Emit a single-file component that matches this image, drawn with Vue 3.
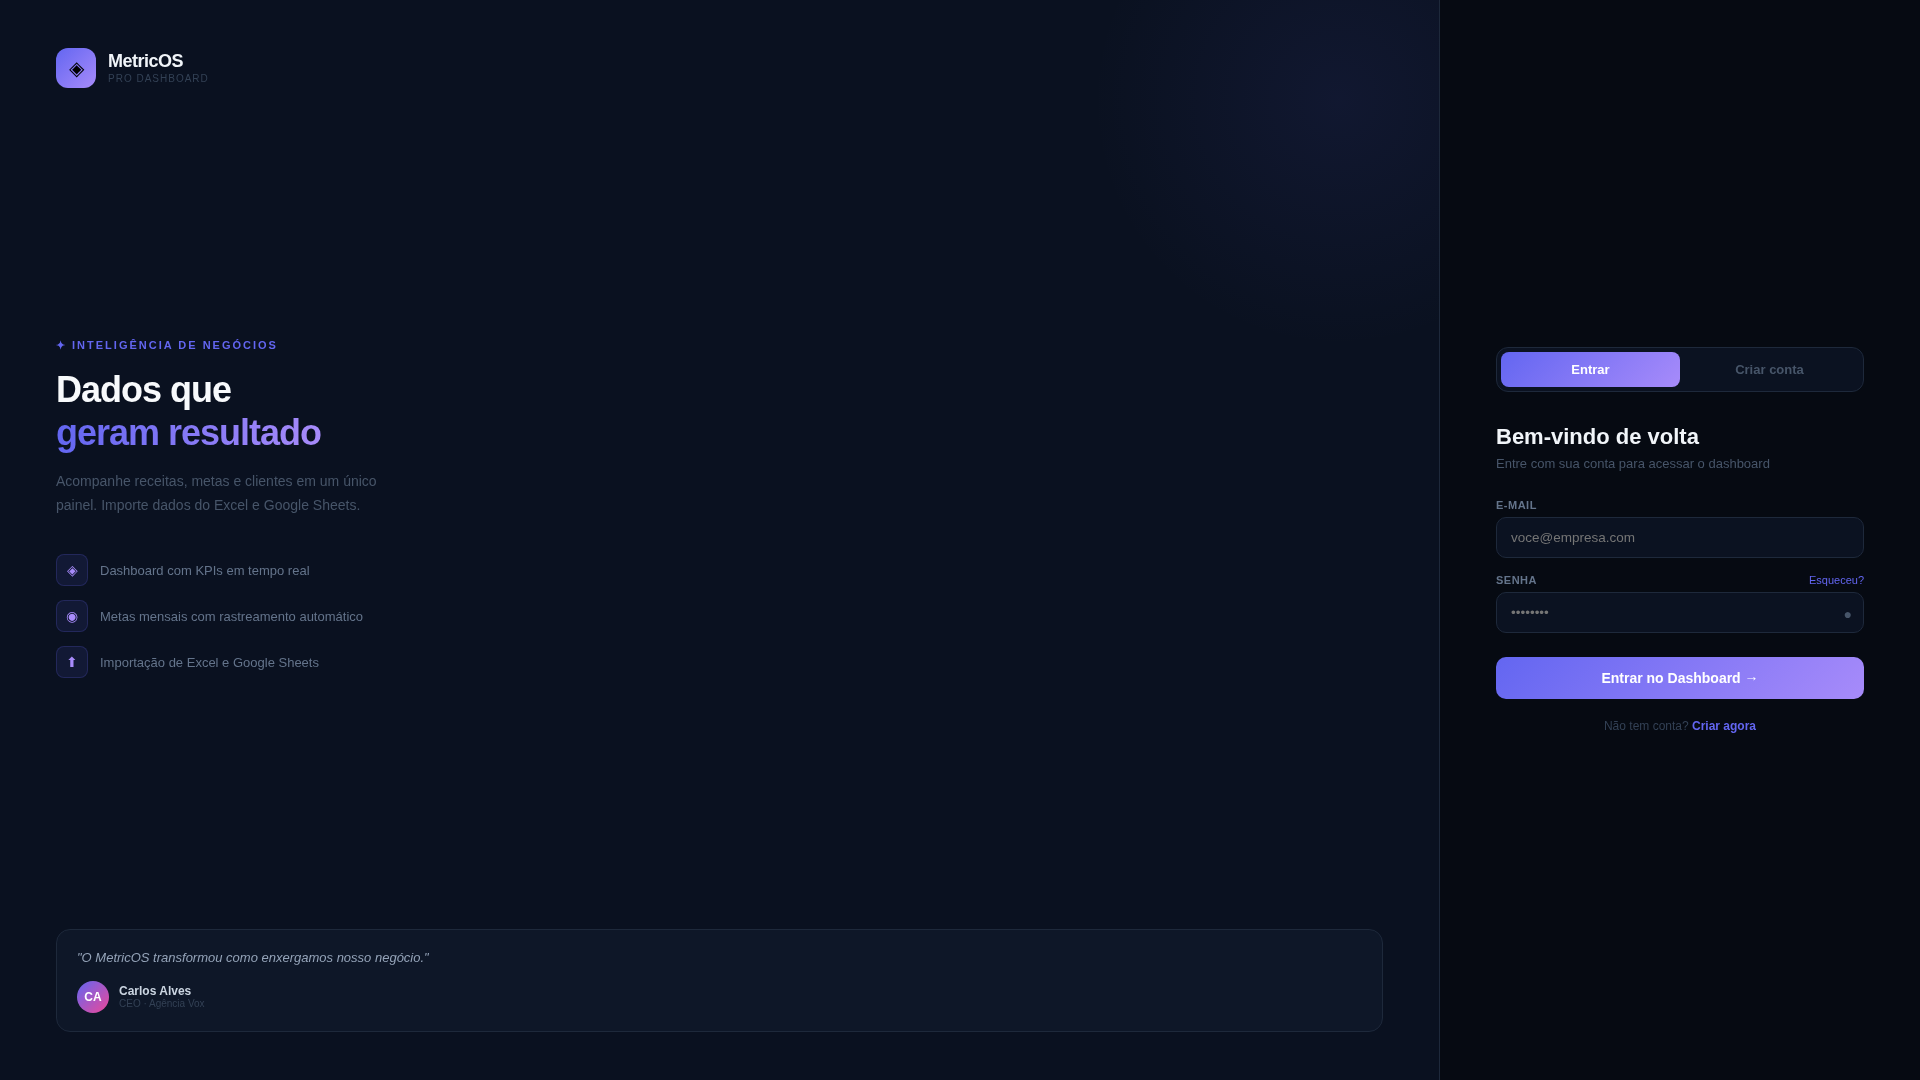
<template>
  <div class="page">
    <section class="left">
      <div class="glow"></div>

      <div class="brand">
        <div class="brand-icon">◈</div>
        <div class="brand-text">
          <div class="brand-name">MetricOS</div>
          <div class="brand-sub">PRO DASHBOARD</div>
        </div>
      </div>

      <div class="hero">
        <div class="eyebrow">✦ INTELIGÊNCIA DE NEGÓCIOS</div>
        <h1>Dados que<br><span>geram resultado</span></h1>
        <p class="lead">Acompanhe receitas, metas e clientes em um único painel. Importe dados do Excel e Google Sheets.</p>
        <ul class="features">
          <li v-for="f in features" :key="f.text">
            <span class="feature-icon">{{ f.icon }}</span>
            <span class="feature-text">{{ f.text }}</span>
          </li>
        </ul>
      </div>

      <div class="quote-card">
        <p class="quote">"O MetricOS transformou como enxergamos nosso negócio."</p>
        <div class="author">
          <div class="avatar">CA</div>
          <div>
            <div class="author-name">Carlos Alves</div>
            <div class="author-role">CEO · Agência Vox</div>
          </div>
        </div>
      </div>
    </section>

    <section class="right">
      <div class="form">
        <div class="tabs">
          <button class="tab active">Entrar</button>
          <button class="tab">Criar conta</button>
        </div>

        <h2>Bem-vindo de volta</h2>
        <p class="sub">Entre com sua conta para acessar o dashboard</p>

        <label class="field-label">E-MAIL</label>
        <div class="input-wrap">
          <input type="email" placeholder="voce@empresa.com" />
        </div>

        <div class="label-row">
          <label class="field-label">SENHA</label>
          <a class="forgot">Esqueceu?</a>
        </div>
        <div class="input-wrap">
          <input type="password" placeholder="••••••••" />
          <span class="eye">●</span>
        </div>

        <button class="submit">Entrar no Dashboard <span class="arrow">→</span></button>
        <p class="foot">Não tem conta? <a>Criar agora</a></p>
      </div>
    </section>
  </div>
</template>

<script setup>
const features = [
  { icon: '◈', text: 'Dashboard com KPIs em tempo real' },
  { icon: '◉', text: 'Metas mensais com rastreamento automático' },
  { icon: '⬆', text: 'Importação de Excel e Google Sheets' }
]
</script>

<style>
html, body { margin: 0; background: #0a1120; }
</style>

<style scoped>
.page {
  display: flex;
  height: 1080px;
  font-family: "Liberation Sans", Arial, sans-serif;
  background: #0a1120;
  overflow: hidden;
}

.left {
  position: relative;
  flex: 1;
  display: flex;
  flex-direction: column;
  justify-content: space-between;
  padding: 48px 56px;
  overflow: hidden;
  border-right: 1px solid #1e293b;
}
.glow {
  position: absolute;
  top: -150px;
  right: -150px;
  width: 500px;
  height: 500px;
  border-radius: 50%;
  background: radial-gradient(circle, rgba(99, 102, 241, 0.08) 0%, transparent 70%);
}

.brand, .hero, .quote-card, .form { will-change: transform; }

.brand { display: flex; align-items: center; gap: 12px; position: relative; }
.brand-icon {
  width: 40px;
  height: 40px;
  border-radius: 12px;
  background: linear-gradient(135deg, #6366f1, #a78bfa);
  display: flex;
  align-items: center;
  justify-content: center;
  font-size: 20px;
  color: #000;
}
.brand-text { padding-bottom: 2px; }
.brand-name {
  font-size: 18px;
  font-weight: 700;
  letter-spacing: -0.5px;
  color: #f1f5f9;
}
.brand-sub {
  margin-top: 1px;
  font-size: 10px;
  letter-spacing: 1px;
  color: #334155;
}

.hero { position: relative; }
.eyebrow {
  font-size: 11px;
  font-weight: 600;
  letter-spacing: 2px;
  line-height: 13px;
  color: #6366f1;
  margin-bottom: 16px;
}
h1 {
  margin: 0 0 16px;
  font-size: 36px;
  font-weight: 800;
  line-height: 1.2;
  letter-spacing: -1px;
  color: #f8fafc;
}
h1 span {
  background: linear-gradient(90deg, #6366f1, #a78bfa);
  -webkit-background-clip: text;
  background-clip: text;
  color: transparent;
}
.lead {
  margin: 0 0 36px;
  width: 340px;
  font-size: 14px;
  line-height: 1.7;
  color: #475569;
}
.features {
  list-style: none;
  margin: 0;
  padding: 0;
  display: flex;
  flex-direction: column;
  gap: 14px;
}
.features li {
  display: flex;
  align-items: center;
  gap: 12px;
  font-size: 13px;
  color: #64748b;
}
.feature-text { padding-top: 2px; }
.feature-icon {
  width: 32px;
  height: 32px;
  box-sizing: border-box;
  border-radius: 8px;
  background: rgba(99, 102, 241, 0.1);
  border: 1px solid rgba(99, 102, 241, 0.2);
  display: flex;
  align-items: center;
  justify-content: center;
  font-size: 14px;
  color: #a78bfa;
}

.quote-card {
  position: relative;
  background: #0e1728;
  border: 1px solid #1e293b;
  border-radius: 14px;
  padding: 18px 20px;
}
.quote {
  margin: 0 0 12px;
  font-size: 13px;
  font-style: italic;
  line-height: 1.6;
  color: #94a3b8;
}
.author { display: flex; align-items: center; gap: 10px; }
.avatar {
  width: 32px;
  height: 32px;
  border-radius: 50%;
  background: linear-gradient(135deg, #6366f1, #ec4899);
  display: flex;
  align-items: center;
  justify-content: center;
  font-size: 12px;
  font-weight: 700;
  color: #fff;
}
.author-name { font-size: 12px; font-weight: 600; color: #cbd5e1; }
.author-role { font-size: 10px; color: #334155; }

.right {
  width: 480px;
  box-sizing: border-box;
  flex-shrink: 0;
  display: flex;
  flex-direction: column;
  justify-content: center;
  padding: 0 56px;
  background: #060a12;
}
.form { display: flex; flex-direction: column; }
.tabs {
  display: flex;
  padding: 4px;
  height: 45px;
  box-sizing: border-box;
  background: #0b1221;
  border: 1px solid #1e293b;
  border-radius: 12px;
  margin-bottom: 32px;
}
.tab {
  flex: 1;
  border: 0;
  border-radius: 8px;
  background: transparent;
  font-family: inherit;
  font-size: 13px;
  font-weight: 600;
  color: #475569;
}
.tab.active {
  background: linear-gradient(135deg, #6366f1, #a78bfa);
  color: #fff;
}
h2 {
  margin: 0 0 6px;
  font-size: 22px;
  font-weight: 700;
  line-height: 26px;
  color: #f1f5f9;
}
.sub {
  margin: 0 0 28px;
  font-size: 13px;
  line-height: 15px;
  color: #475569;
}
.field-label {
  display: block;
  margin-bottom: 5px;
  font-size: 11px;
  font-weight: 600;
  letter-spacing: 0.5px;
  line-height: 13px;
  color: #64748b;
}
.label-row {
  display: flex;
  justify-content: space-between;
  margin-top: 16px;
}
.forgot { font-size: 11px; line-height: 13px; color: #6366f1; }
.input-wrap { position: relative; }
input {
  display: block;
  width: 100%;
  height: 41px;
  box-sizing: border-box;
  padding: 0 14px;
  background: #0b1221;
  border: 1px solid #1e293b;
  border-radius: 10px;
  font-family: inherit;
  font-size: 13.5px;
  color: #f1f5f9;
}
input::placeholder { color: #757575; opacity: 1; }
.eye {
  position: absolute;
  right: 12px;
  top: 14px;
  font-size: 14px;
  line-height: 16px;
  color: #475569;
}
.submit {
  margin-top: 24px;
  height: 42px;
  border: 0;
  border-radius: 10px;
  background: linear-gradient(135deg, #6366f1, #a78bfa);
  font-family: inherit;
  font-size: 14px;
  font-weight: 600;
  color: #fff;
}
.arrow { position: relative; top: -2px; }
.foot {
  margin: 20px 0 0;
  text-align: center;
  font-size: 12px;
  line-height: 14px;
  color: #334155;
}
.foot a { font-weight: 600; color: #6366f1; }
</style>
